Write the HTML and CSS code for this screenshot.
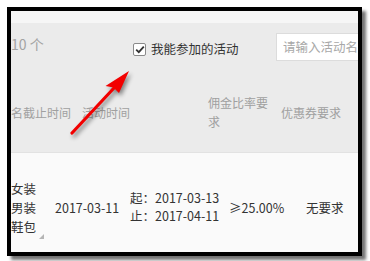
FILE: index.html
```html
<!DOCTYPE html>
<html lang="zh-CN">
<head>
<meta charset="utf-8">
<link rel="stylesheet" href="styles.css">
</head>
<body>
<div class="frame">
  <div class="topstrip"></div>
  <div class="greyzone">
    <div class="toolbar">
      <div class="count">10 个</div>
      <label class="check">
        <span class="box"><svg width="10" height="9" viewBox="0 0 10 9"><path d="M1.2 4.6 L3.8 7.2 L8.8 1.6" fill="none" stroke="#333" stroke-width="1.8"/></svg></span>
        <span class="check-text">我能参加的活动</span>
      </label>
      <div class="search">请输入活动名称</div>
    </div>
    <div class="head">
      <div class="h h1">名截止时间</div>
      <div class="h h2">活动时间</div>
      <div class="h h3">佣金比率要求</div>
      <div class="h h4">优惠券要求</div>
    </div>
  </div>
  <div class="row">
    <div class="c c1">女装<br>男装<br>鞋包<span class="tri"></span></div>
    <div class="c c2">2017-03-11</div>
    <div class="c c3">起：2017-03-13<br>止：2017-04-11</div>
    <div class="c c4">≥25.00%</div>
    <div class="c c5">无要求</div>
  </div>
</div>
<svg class="arrow" width="370" height="261" viewBox="0 0 370 261">
  <line x1="72" y1="133" x2="114" y2="88" stroke="#f20000" stroke-width="3.2" stroke-linecap="round"/>
  <polygon points="129,71 119,93 113.5,87.5 105.5,86" fill="#f20000"/>
</svg>
</body>
</html>
```
FILE: styles.css
```css
html, body {
  margin: 0;
  padding: 0;
  background: #ffffff;
}
body {
  width: 370px;
  height: 261px;
  overflow: hidden;
  position: relative;
  font-family: "Noto Sans CJK SC", "Noto Sans", sans-serif;
  font-size: 12px;
  color: #333;
}
.frame {
  margin: 7px 0 0 7px;
  width: 347px;
  height: 241px;
  border: 4px solid #000;
  box-shadow: 4px 4px 3px rgba(0, 0, 0, 0.55);
  overflow: hidden;
  background: #fafafa;
}
.topstrip {
  height: 12px;
  background: #f6f6f6;
}
.greyzone {
  height: 130px;
  background: #ebebeb;
  border-bottom: 1px solid #e2e2e2;
  box-sizing: border-box;
}
.toolbar {
  display: flex;
  align-items: flex-start;
  padding-top: 10px;
  height: 52px;
  box-sizing: border-box;
}
.count {
  width: 122px;
  margin-top: 1px;
  font-size: 14px;
  line-height: 20px;
  color: #a3a3a3;
}
.check {
  display: flex;
  align-items: center;
  margin-top: 6px;
  line-height: 20px;
  font-size: 12.5px;
  color: #333;
}
.box {
  width: 11px;
  height: 11px;
  border: 1px solid #8a8a8a;
  border-radius: 2px;
  background: #fff;
  display: flex;
  align-items: center;
  justify-content: center;
  margin-right: 5px;
}
.search {
  margin-left: auto;
  margin-right: -14px;
  width: 96px;
  height: 28px;
  box-sizing: border-box;
  background: #fff;
  border: 1px solid #dcdcdc;
  padding-left: 6px;
  line-height: 26px;
  font-size: 12.5px;
  color: #a8a8a8;
  white-space: nowrap;
  overflow: hidden;
}
.head {
  display: flex;
  align-items: center;
  height: 74px;
  color: #a0a0a0;
  font-size: 12px;
  line-height: 19px;
}
.h1 { width: 71px; white-space: nowrap; }
.h2 { width: 126px; }
.h3 { width: 61px; margin-right: 12px; }
.h4 { white-space: nowrap; }
.row {
  display: flex;
  align-items: center;
  height: 108px;
  font-size: 12.5px;
  color: #333;
}
.c1 {
  width: 44px;
  line-height: 19px;
  position: relative;
}
.tri {
  position: absolute;
  left: 28px;
  bottom: -3px;
  width: 0;
  height: 0;
  border-left: 5px solid transparent;
  border-bottom: 5px solid #b5b5b5;
}
.c2 { width: 75px; }
.c3 { width: 99px; line-height: 18px; }
.c4 { width: 77px; }
.c5 { white-space: nowrap; }
.arrow {
  position: absolute;
  left: 0;
  top: 0;
  filter: drop-shadow(2px 3px 2px rgba(0, 0, 0, 0.45));
}
```
